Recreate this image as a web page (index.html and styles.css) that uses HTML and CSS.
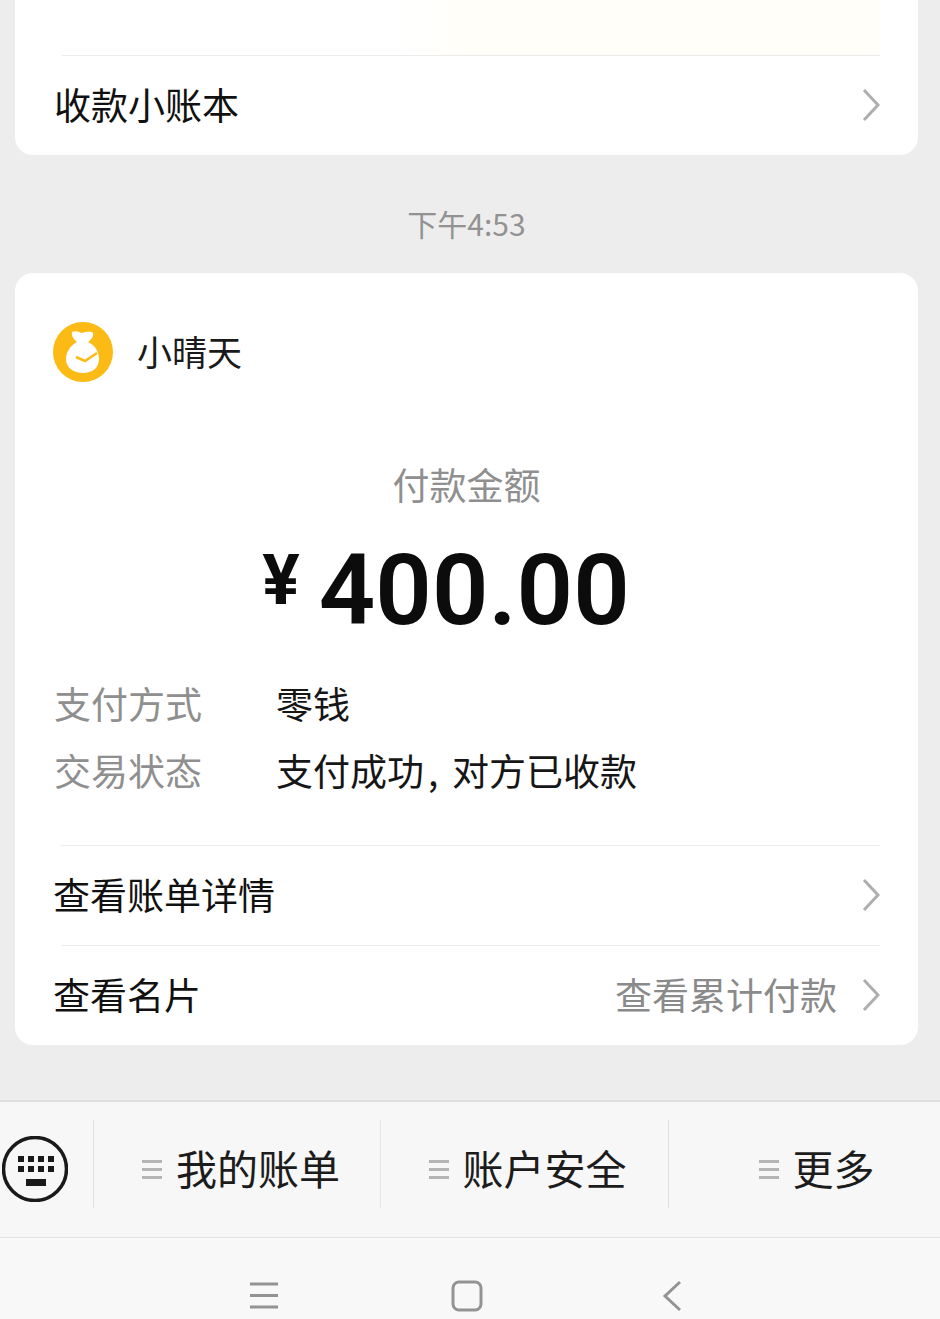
FILE: index.html
```html
<!DOCTYPE html>
<html lang="zh-CN">

<head>
	<meta charset="UTF-8" />
	<title>微信支付</title>
	<link rel="stylesheet" href="styles.css">
</head>

<body>
	<div class="page">
		<main class="chat">
			<section class="card card-top">
				<div class="top-fade"></div>
				<div class="row">
					<span class="row-title">收款小账本</span>
					<svg class="chevron" viewBox="0 0 18 34"><path d="M2 2l14 15L2 32" /></svg>
				</div>
			</section>

			<div class="time">下午4:53</div>

			<section class="card card-pay">
				<div class="merchant">
					<svg class="avatar" viewBox="0 0 60 60">
						<circle cx="30" cy="30" r="30" fill="#fbbb14" />
						<path d="M19 10c4-2 7 0 10 1 4-1 9-2 11 0 1 3-2 7-5 9 7 3 11 10 11 17 0 9-7 14-16 14s-17-5-17-14c0-7 5-14 11-17-3-2-6-7-5-10z" fill="#fff" />
						<path d="M23 35l9 4 12-8" fill="none" stroke="#fbbb14" stroke-width="2.500" />
					</svg>
					<span class="merchant-name">小晴天</span>
				</div>

				<div class="amount-label">付款金额</div>
				<div class="amount"><span class="currency">¥</span><span class="value">400.00</span></div>

				<dl class="info">
					<div class="info-row">
						<dt>支付方式</dt>
						<dd>零钱</dd>
					</div>
					<div class="info-row">
						<dt>交易状态</dt>
						<dd>支付成功<span class="comma">,</span>对方已收款</dd>
					</div>
				</dl>

				<div class="links">
					<div class="row">
						<span class="row-title">查看账单详情</span>
						<svg class="chevron" viewBox="0 0 18 34"><path d="M2 2l14 15L2 32" /></svg>
					</div>
					<div class="row">
						<span class="row-title">查看名片</span>
						<span class="row-extra">查看累计付款</span>
						<svg class="chevron" viewBox="0 0 18 34"><path d="M2 2l14 15L2 32" /></svg>
					</div>
				</div>
			</section>
		</main>

		<nav class="menu-bar">
			<div class="keyboard">
				<svg viewBox="0 0 66 66" width="66" height="66">
					<circle cx="33" cy="33" r="31.5" fill="none" stroke="#1a1a1a" stroke-width="3.5" />
					<g fill="#1a1a1a">
						<rect x="16" y="20" width="6" height="6" /><rect x="26" y="20" width="6" height="6" /><rect x="36" y="20" width="6" height="6" /><rect x="46" y="20" width="6" height="6" />
						<rect x="16" y="30" width="6" height="6" /><rect x="26" y="30" width="6" height="6" /><rect x="36" y="30" width="6" height="6" /><rect x="46" y="30" width="6" height="6" />
						<rect x="24" y="43" width="20" height="7" />
					</g>
				</svg>
			</div>
			<div class="menu-item menu-bill"><span class="lines"></span>我的账单</div>
			<div class="menu-item menu-safe"><span class="lines"></span>账户安全</div>
			<div class="menu-item menu-more"><span class="lines"></span>更多</div>
		</nav>

		<footer class="sys-bar">
			<svg class="sys-icon" viewBox="0 0 28 28"><path d="M0 2h28M0 13.500h28M0 25h28" /></svg>
			<svg class="sys-icon" viewBox="0 0 28 28"><rect x="0" y="0" width="28" height="28" rx="6" /></svg>
			<svg class="sys-icon" viewBox="0 0 28 28"><path d="M24 0L9 14l15 14" /></svg>
		</footer>
	</div>
</body>

</html>
```

FILE: styles.css
```css
* {
	box-sizing: border-box;
}

html,
body {
	margin: 0;
	height: 100%;
}

body {
	font-family: "Noto Sans CJK SC", "Liberation Sans", sans-serif;
	background-color: #ededed;
	color: #1a1a1a;
	overflow: hidden;
}

.page {
	height: 1319px;
	display: flex;
	flex-direction: column;
}

.chat {
	height: 1100px;
	padding: 0 22px 0 15px;
}

.card {
	background: #fff;
	border-radius: 0 0 18px 18px;
}

.card-top {
	height: 155px;
	padding: 0 38px 0 40px;
}

.top-fade {
	height: 55px;
	background: linear-gradient(90deg, #fff 0%, #fff 42%, #fffef9 50%, #fffef8 100%);
}

.row {
	height: 100px;
	padding-bottom: 3px;
	display: flex;
	align-items: center;
	border-top: 1px solid #ececec;
	margin-left: 7px;
}

.row-title {
	font-size: 37px;
	color: #111;
	margin-left: -8px;
}

.row-extra {
	font-size: 37px;
	color: #8a8a8a;
	margin-left: auto;
	margin-right: 25px;
}

.chevron {
	width: 18px;
	height: 34px;
	margin-left: auto;
	margin-top: 2px;
	fill: none;
	stroke: #aeaeae;
	stroke-width: 3;
}

.row-extra + .chevron {
	margin-left: 0;
}

.time {
	height: 118px;
	line-height: 136px;
	text-align: center;
	font-size: 30px;
	color: #929292;
}

.card-pay {
	height: 772px;
	border-radius: 18px;
	padding: 49px 38px 0 38px;
}

.merchant {
	display: flex;
	align-items: center;
	gap: 24px;
}

.avatar {
	width: 60px;
	height: 60px;
}

.merchant-name {
	font-size: 35px;
	margin-top: -4px;
}

.amount-label {
	margin-top: 74px;
	text-align: center;
	font-size: 37px;
	line-height: 56px;
	color: #8f8f8f;
}

.amount {
	margin-top: 23px;
	height: 110px;
	padding-right: 41px;
	display: flex;
	justify-content: center;
	align-items: center;
	gap: 19px;
	color: #0c0c0c;
	font-family: Roboto, "Liberation Sans", sans-serif;
	font-weight: 700;
}

.currency {
	font-size: 70px;
	margin-top: -20px;
}

.value {
	font-size: 99px;
	font-weight: 600;
}

.info {
	margin: 26px 0 0;
}

.info-row {
	display: flex;
	height: 67px;
	padding-bottom: 4px;
	align-items: center;
	font-size: 37px;
}

.info dt {
	width: 222px;
	margin-left: 1px;
	color: #8f8f8f;
}

.info dd {
	margin: 0;
	color: #161616;
}

.comma {
	display: inline-block;
	width: 28px;
	padding-left: 4px;
}

.links {
	margin-top: 40px;
}

.links .row {
	margin-left: 8px;
}

.menu-bar {
	height: 138px;
	display: flex;
	align-items: flex-start;
	padding-top: 18px;
	background: #f7f7f7;
	border-top: 2px solid #dfdfdf;
	border-bottom: 1px solid #e4e4e4;
}

.keyboard {
	width: 94px;
	height: 88px;
	padding-left: 2px;
	padding-top: 10px;
	display: flex;
	align-items: center;
	border-right: 1px solid #e0e0e0;
}

.menu-item {
	height: 88px;
	padding-top: 6px;
	display: flex;
	align-items: center;
	justify-content: center;
	gap: 14px;
	font-size: 41px;
	color: #1c1c1c;
}

.menu-bill {
	width: 287px;
	padding-left: 8px;
	border-right: 1px solid #e6e6e6;
}

.menu-safe {
	width: 288px;
	padding-left: 6px;
	border-right: 1px solid #e0e0e0;
}

.menu-more {
	flex: 1;
	padding-left: 24px;
}

.lines {
	width: 20px;
	height: 19px;
	margin-top: 4px;
	border-top: 3px solid #b5b5b5;
	border-bottom: 3px solid #b5b5b5;
	position: relative;
}

.lines::after {
	content: "";
	position: absolute;
	left: 0;
	right: 0;
	top: 5px;
	height: 3px;
	background: #b5b5b5;
}

.sys-bar {
	flex: 1;
	background: #f8f8f8;
	display: flex;
	align-items: center;
	padding: 34px 256px 0 250px;
	justify-content: space-between;
}

.sys-icon {
	width: 28px;
	height: 28px;
	overflow: visible;
	fill: none;
	stroke: #939393;
	stroke-width: 3;
}
```
